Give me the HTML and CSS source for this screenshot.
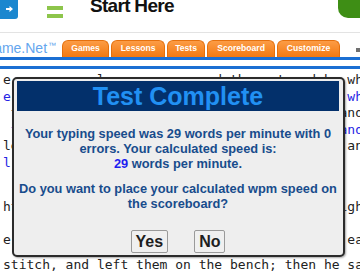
FILE: index.html
```html
<!DOCTYPE html>
<html lang="en">
<head>
<meta charset="utf-8">
<title>Test Complete</title>
<link rel="stylesheet" href="styles.css">
</head>
<body>
<div class="page">
  <header class="topbar">
    <div class="menu-btn">
      <svg width="7" height="6" viewBox="0 0 7 6"><path d="M0 2h3.5V0L7 3 3.5 6V4H0z" fill="#fff"/></svg>
    </div>
    <div class="burger"><span></span><span></span></div>
    <div class="title">Start Here</div>
    <div class="green-tab"></div>
  </header>
  <nav class="navrow">
    <div class="logo"><span class="logo-text">TypingGame.Net<span class="tm">™</span></span></div>
    <div class="tabs">
      <a class="tab tab-games">Games</a>
      <a class="tab tab-lessons">Lessons</a>
      <a class="tab tab-tests">Tests</a>
      <a class="tab tab-score">Scoreboard</a>
      <a class="tab tab-custom">Customize</a>
    </div>
    <span class="grip"></span>
  </nav>
  <div class="rule rule-a"></div>
  <div class="rule rule-b"></div>
  <main class="typing">
    <div class="line">e so near a lone man crossed the mat and he wh</div>
    <div class="line typed">e so near a lone man crossed the mat and he wh</div>
    <div class="line"> the old cobbler was busy at work, sewing, and</div>
    <div class="line typed"> the old cobbler was busy at work, sewing, and</div>
    <div class="line">leather shoes on the bench near his window, and</div>
    <div class="line typed">l</div>
    <div class="line gap-a">ht, and he worked on until it was late at night</div>
    <div class="line gap-b">e cut the leather for one pair of new shoes each</div>
    <div class="line gap-c">stitch, and left them on the bench; then he sat down</div>
  </main>
  <div class="modal">
    <div class="modal-head">Test Complete</div>
    <p class="msg">Your typing speed was 29 words per minute with 0 errors. Your calculated speed is:<br><span class="wpm">29</span> words per minute.</p>
    <p class="msg">Do you want to place your calculated wpm speed on the scoreboard?</p>
    <div class="actions">
      <button class="btn">Yes</button>
      <button class="btn">No</button>
    </div>
  </div>
</div>
</body>
</html>
```
FILE: styles.css
```css
* { box-sizing: border-box; margin: 0; padding: 0; }
html, body { width: 360px; height: 277px; overflow: hidden; background: #fff; }
body { font-family: "Liberation Sans", Arial, sans-serif; }
.page { position: relative; width: 360px; height: 277px; overflow: hidden; }

/* top bar */
.topbar { display: flex; align-items: flex-start; height: 33px; border-bottom: 1px solid #e3e3e3; }
.menu-btn { width: 18px; height: 19px; background: #1b87cf; border-radius: 0 0 3px 0; display: flex; align-items: center; justify-content: center; padding-bottom: 2px; }
.burger { margin-left: 29px; margin-top: 6px; display: flex; flex-direction: column; gap: 4px; }
.burger span { display: block; width: 16px; height: 4px; background: #8dc54b; }
.title { margin-left: 27px; margin-top: -4px; font-weight: bold; font-size: 19px; line-height: 19px; color: #111; letter-spacing: -0.7px; }
.green-tab { margin-left: auto; width: 22px; height: 18px; background: #3e8e15; border-radius: 0 0 0 10px; }

/* nav row */
.navrow { display: flex; align-items: flex-end; height: 24px; }
.logo { width: 57px; align-self: flex-start; margin-top: 6px; height: 15px; overflow: hidden; display: flex; justify-content: flex-end; }
.logo-text { white-space: nowrap; font-size: 14px; line-height: 14px; color: #64a6ee; }
.tm { font-size: 8px; vertical-align: 5px; margin-left: 1px; }
.tabs { display: flex; gap: 2px; margin-left: 6px; }
.tab { display: block; height: 17px; border-radius: 6px 6px 0 0; background: linear-gradient(#fc9c45, #f27912); border: 1px solid #e5700d; border-bottom: none; color: #fff; font-weight: bold; font-size: 8.6px; line-height: 15px; text-align: center; }
.tab-games { width: 47px; }
.tab-lessons { width: 54px; }
.tab-tests { width: 38px; }
.tab-score { width: 68px; }
.tab-custom { width: 63px; }
.grip { width: 4px; height: 4px; background: #707070; margin-left: 16px; align-self: flex-start; margin-top: 15px; }

.rule { background: #1b6fd3; }
.rule-a { height: 3px; }
.rule-b { height: 3px; margin-top: 6px; }

/* typing text */
.typing { padding-top: 3px; }
.line { font-family: "DejaVu Sans Mono", monospace; font-size: 13px; line-height: 16.5px; white-space: pre; padding-left: 3px; color: #222; height: 16.5px; }
.typed { color: #2424e4; }
.gap-a { margin-top: 28px; }
.gap-b { margin-top: 16px; }
.gap-c { margin-top: 8.5px; }

/* modal */
.modal { position: absolute; left: 12px; top: 77px; width: 333px; height: 180px; background: #eeeeee; border: 2px solid #2b2b2b; border-radius: 5px; padding: 2px 4px 2px 3px; box-shadow: 1px 1px 2px rgba(0,0,0,.35); display: flex; flex-direction: column; text-align: center; }
.modal-head { height: 30px; background: #03306b; color: #2190f3; font-size: 25px; font-weight: bold; line-height: 30px; }
.msg { margin: 14.5px -2px 0; font-size: 12.8px; line-height: 15px; font-weight: bold; color: #184c8c; }
.msg + .msg { margin-top: 10px; }
.wpm { color: #1d1df0; }
.actions { margin-top: 19.5px; display: flex; justify-content: center; gap: 26px; }
.btn { font: bold 16px/19px "Liberation Sans", Arial, sans-serif; color: #1e1e1e; background: #f0f0f0; border: 1px solid #9a9a9a; border-radius: 2px; padding: 1px 4px; height: 23px; }
```
